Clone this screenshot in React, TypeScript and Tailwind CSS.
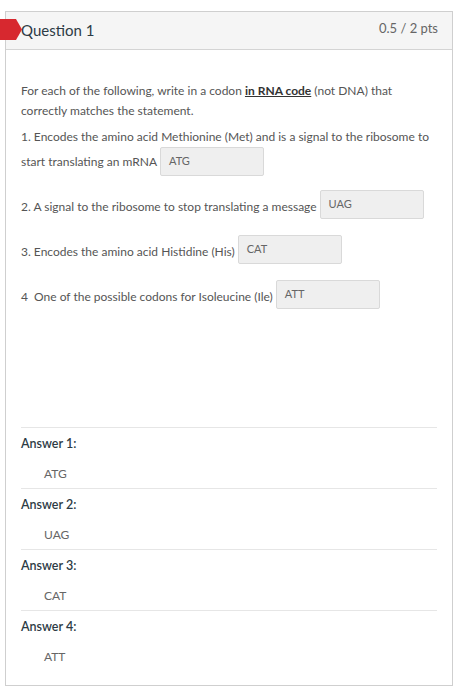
import type { FC } from 'react'

type Item = { label: string; value: string }

const questions: Item[] = [
  { label: '2. A signal to the ribosome to stop translating a message', value: 'UAG' },
  { label: '3. Encodes the amino acid Histidine (His)', value: 'CAT' },
  { label: '4  One of the possible codons for Isoleucine (Ile)', value: 'ATT' },
]

const answers = ['ATG', 'UAG', 'CAT', 'ATT']

const Blank: FC<{ value: string }> = ({ value }) => (
  <span className="ml-[3px] inline-flex h-[29px] w-[104px] shrink-0 items-center rounded-[2px] border border-[#d9d9d9] bg-[#efefef] pl-[8px] text-[11px] text-[#666]">
    {value}
  </span>
)

export default function App() {
  return (
    <div className="min-h-[700px] bg-white pl-[5px] pt-[11px] font-['Lato','Open_Sans',sans-serif] text-[#2d3b45]">
      <div className="relative w-[448px] border border-[#cfcfcf]">
        {/* red "incorrect" marker hanging over the left edge */}
        <svg className="absolute left-[-6px] top-[6px]" width="23" height="23" viewBox="0 0 23 23">
          <path d="M0 1 H16 L22 11.5 L16 22 H0 Z" fill="#d7282f" />
        </svg>

        <div className="flex h-[38px] items-center justify-between border-b border-[#d4d4d4] bg-[#f5f5f5] pl-[15px] pr-[14px]">
          <span className="text-[15px] text-[#2d3b45]">Question 1</span>
          <span className="mb-[3px] text-[13px] text-[#666]">0.5 / 2 pts</span>
        </div>

        <div className="px-[15px] pt-[31px] text-[12px] text-[#555]">
          <p className="leading-[20px]">
            For each of the following, write in a codon{' '}
            <span className="font-bold text-[#333] underline">in RNA code</span> (not DNA) that correctly matches the
            statement.
          </p>

          <div className="mt-[6px]">
            <p className="leading-[20px]">1. Encodes the amino acid Methionine (Met) and is a signal to the ribosome to</p>
            <div className="flex items-center">
              <span>start translating an mRNA</span>
              <Blank value="ATG" />
            </div>
          </div>

          <div className="mt-[14px] flex flex-col gap-[16px]">
            {questions.map((q) => (
              <div key={q.value} className="flex items-center whitespace-pre">
                <span className="pt-[4px]">{q.label}</span>
                <Blank value={q.value} />
              </div>
            ))}
          </div>

          <div className="mt-[118px]">
            {answers.map((a, i) => (
              <div key={a} className="h-[61px] border-t border-[#e6e6e6]">
                <div className="pt-[7px] text-[12.5px] font-semibold text-[#2d3b45]">Answer {i + 1}:</div>
                <div className="mt-[11px] pl-[23px] text-[12px] text-[#666]">{a}</div>
              </div>
            ))}
          </div>
        </div>
        <div className="h-[14px]" />
      </div>
    </div>
  )
}
